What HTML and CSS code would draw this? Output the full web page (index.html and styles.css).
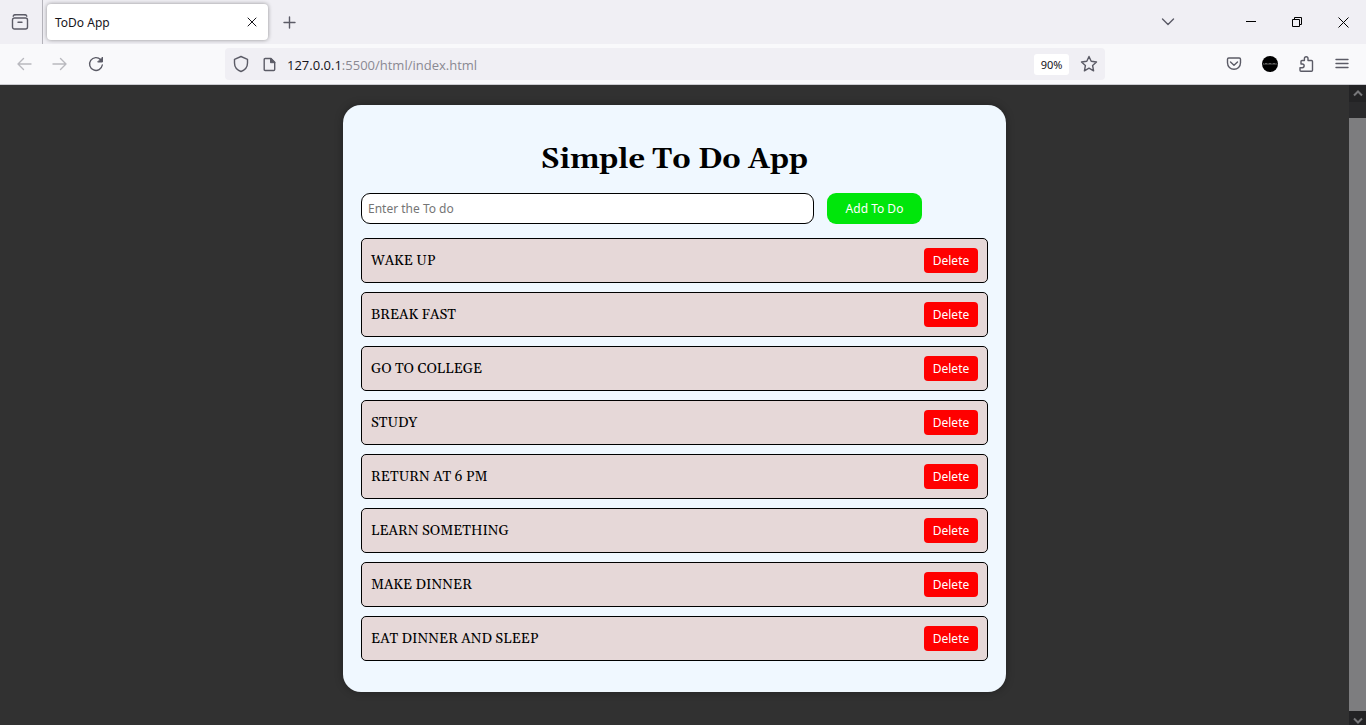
FILE: index.html
```html
<!DOCTYPE html>
<html lang="en">
<head>
<meta charset="utf-8">
<meta name="viewport" content="width=device-width, initial-scale=1">
<title>ToDo App</title>
<link rel="stylesheet" href="styles.css">
</head>
<body>
<header class="tabbar">
  <button class="icon-btn firefox-view" aria-label="Recent browsing">
    <svg width="18" height="18" viewBox="0 0 18 18"><path d="M4 1.700h10M3.500 5h11a2 2 0 0 1 2 2v7a2 2 0 0 1-2 2h-11a2 2 0 0 1-2-2V7a2 2 0 0 1 2-2zM7 9.300h4"/><path d="M2.200 3.200Q2.500 1.700 4 1.700M15.800 3.200Q15.500 1.700 14 1.700"/></svg>
  </button>
  <div class="tab">
    <span class="tab-title">ToDo App</span>
    <button class="icon-btn tab-close" aria-label="Close tab">
      <svg class="dark" width="10" height="10" viewBox="0 0 10 10"><path d="M1 1l8 8M9 1L1 9"/></svg>
    </button>
  </div>
  <button class="icon-btn new-tab" aria-label="New tab">
    <svg width="14" height="14" viewBox="0 0 14 14"><path d="M7.500 2v11M2 7.500h11"/></svg>
  </button>
  <div class="window-controls">
    <button class="icon-btn all-tabs" aria-label="List all tabs">
      <svg width="14" height="8" viewBox="0 0 14 8"><path d="M1.500 1l5.500 5.500L12.500 1"/></svg>
    </button>
    <button class="icon-btn win" aria-label="Minimize">
      <svg class="black" width="10" height="10" viewBox="0 0 10 10"><path d="M0 4.500h10"/></svg>
    </button>
    <button class="icon-btn win" aria-label="Restore">
      <svg class="black" width="10" height="10" viewBox="0 0 10 10"><path d="M.5 2.500h7v7h-7zM2.500 2.500v-2h7v7h-2"/></svg>
    </button>
    <button class="icon-btn win" aria-label="Close window">
      <svg class="black" width="11" height="11" viewBox="0 0 11 11"><path d="M.5.5l10 10M10.500.5l-10 10"/></svg>
    </button>
  </div>
</header>
<nav class="toolbar">
  <div class="nav-buttons">
    <button class="icon-btn" aria-label="Back" disabled><svg width="16" height="14" viewBox="0 0 16 14"><path d="M15 7H2M7.500 1.500L2 7l5.500 5.500"/></svg></button>
    <button class="icon-btn" aria-label="Forward" disabled><svg width="16" height="14" viewBox="0 0 16 14"><path d="M1 7h13M8.500 1.500L14 7l-5.500 5.500"/></svg></button>
    <button class="icon-btn" aria-label="Reload"><svg width="16" height="16" viewBox="0 0 16 16"><path d="M14.300 9A6.400 6.400 0 1 1 12.700 3.700"/><path class="solid" d="M14.500 1.500v4.500h-4.500z"/></svg></button>
  </div>
  <div class="urlbar">
    <svg width="16" height="18" viewBox="0 0 16 18"><path d="M8 1.500L14.500 4.300V8c0 4-2.500 7-6.500 8.500C4 15 1.500 12 1.500 8V4.300z"/></svg>
    <svg class="page" width="13" height="15" viewBox="0 0 13 15"><path d="M2.200 1.500h5.800l3.700 3.700v7.300q0 1-1 1h-8.500q-1 0-1-1v-10q0-1 1-1z"/><path class="solid" d="M7.500 1.500v4.200h4.200z"/></svg>
    <span class="url"><span class="host">127.0.0.1</span>:5500/html/index.html</span>
    <button class="zoom">90%</button>
    <button class="icon-btn star" aria-label="Bookmark this page"><svg width="18" height="18" viewBox="0 0 18 18"><path d="M9 1.500l2.200 4.800 5.300.7-3.900 3.500 1 5.300L9 13.200l-4.600 2.600 1-5.300L1.500 7l5.300-.7z"/></svg></button>
  </div>
  <div class="tools">
    <button class="icon-btn" aria-label="Save to Pocket"><svg width="16" height="16" viewBox="0 0 16 16"><path d="M2.800 2h10.400q1.300 0 1.300 1.300v3.500a6.500 6.500 0 0 1-13 0V3.300Q1.500 2 2.800 2zM4.500 6L8 9.300 11.500 6"/></svg></button>
    <button class="icon-btn" aria-label="Account"><svg width="16" height="16" viewBox="0 0 16 16"><circle class="avatar" cx="8" cy="8" r="8"/><path class="mark" d="M1 8.500l1-1 1 1 1-1.500 1 1.500 1-1 1 1 1-1.500 1 1.500 1-1 1 1 1-1.500 1 1.500 1-1 1 1"/></svg></button>
    <button class="icon-btn" aria-label="Extensions"><svg width="16" height="18" viewBox="0 0 16 18"><path d="M2 12.700V15.300q0 1 1 1h10.500q1 0 1-1V6.500q0-1-1-1H10V3.500a1.800 1.800 0 0 0-3.600 0V5.500H4q-1 0-1 1v2.500h1.300a1.850 1.850 0 0 1 0 3.700H2"/></svg></button>
    <button class="icon-btn" aria-label="Open application menu"><svg width="14" height="12" viewBox="0 0 14 12"><path d="M1 1.500h12M1 5.500h12M1 9.500h12"/></svg></button>
  </div>
</nav>
<div class="viewport">
  <main class="page-body">
    <section class="card">
      <h1>Simple To Do App</h1>
      <form class="add-form">
        <input class="todo-input" type="text" placeholder="Enter the To do" aria-label="Enter the To do">
        <button class="add-btn" type="button">Add To Do</button>
      </form>
      <ul class="list">
        <li class="item"><span>WAKE UP</span><button class="delete">Delete</button></li>
        <li class="item"><span>BREAK FAST</span><button class="delete">Delete</button></li>
        <li class="item"><span>GO TO COLLEGE</span><button class="delete">Delete</button></li>
        <li class="item"><span>STUDY</span><button class="delete">Delete</button></li>
        <li class="item"><span>RETURN AT 6 PM</span><button class="delete">Delete</button></li>
        <li class="item"><span>LEARN SOMETHING</span><button class="delete">Delete</button></li>
        <li class="item"><span>MAKE DINNER</span><button class="delete">Delete</button></li>
        <li class="item"><span>EAT DINNER AND SLEEP</span><button class="delete">Delete</button></li>
      </ul>
    </section>
  </main>
  <div class="scrollbar" aria-hidden="true">
    <div class="arrow"><svg width="10" height="7" viewBox="0 0 10 7"><path d="M1 5.500l4-4 4 4"/></svg></div>
    <div class="thumb"></div>
    <div class="arrow end"><svg width="10" height="7" viewBox="0 0 10 7"><path d="M1 1.500l4 4 4-4"/></svg></div>
  </div>
</div>
</body>
</html>
```
FILE: styles.css
```css
* { box-sizing: border-box; }
body {
  margin: 0;
  min-height: 100vh;
  display: flex;
  flex-direction: column;
  font-family: "Noto Sans", sans-serif;
  font-size: 12px;
  color: #15141a;
}
button { font: inherit; color: inherit; border: 0; padding: 0; background: none; }
svg { display: block; flex: none; fill: none; stroke: #5b5b66; stroke-width: 1.4; stroke-linecap: round; stroke-linejoin: round; }
.icon-btn { display: flex; align-items: center; justify-content: center; flex: none; }
.icon-btn:disabled { opacity: 0.4; }
.solid { fill: #5b5b66; stroke-width: 1; }
.dark { stroke: #15141a; stroke-width: 1; }
.black { stroke: #000; stroke-width: 1; stroke-linecap: butt; stroke-linejoin: miter; }

.tabbar { display: flex; align-items: center; height: 44px; background: #f0eff4; }
.firefox-view { width: 43px; height: 44px; padding-right: 2px; border-right: 1px solid #b4b3ba; }
.tab {
  display: flex;
  align-items: center;
  justify-content: space-between;
  width: 221px;
  height: 36px;
  margin-left: 4px;
  padding: 0 10px 0 8px;
  background: #fff;
  border-radius: 4px;
  box-shadow: 0 0 4px rgba(0, 0, 0, 0.4);
}
.tab-close { width: 12px; height: 12px; }
.new-tab { width: 42px; height: 36px; }
.window-controls { display: flex; margin-left: auto; }
.all-tabs { width: 60px; height: 44px; }
.win { width: 46px; height: 44px; }
.all-tabs + .win { margin-left: 30px; }

.toolbar {
  display: grid;
  grid-template-columns: 225px 1fr 261px;
  align-items: center;
  height: 41px;
  background: #f9f9fb;
  border-bottom: 1px solid #ccccd1;
}
.nav-buttons { display: flex; padding-left: 6px; }
.nav-buttons .icon-btn { width: 36px; height: 32px; }
.urlbar {
  display: flex;
  align-items: center;
  height: 32px;
  padding: 0 7px 0 8px;
  background: #f0eff4;
  border-radius: 4px;
}
.page { margin-left: 14px; }
.url { flex: 1; margin-left: 11px; padding-top: 2px; font-family: "Open Sans", sans-serif; font-size: 13px; color: #8a8992; }
.host { color: #15141a; }
.zoom { width: 35px; height: 21px; border-radius: 3px; background: #fff; font-size: 11px; }
.star { margin-left: 11px; }
.tools { display: flex; justify-content: flex-end; padding-right: 6px; }
.tools .icon-btn { width: 36px; height: 32px; }
.avatar { fill: #000; stroke: none; }
.mark { stroke: #999; stroke-width: 0.7; }

.viewport { flex: 1; display: flex; background: #313131; }
.page-body { flex: 1; padding: 20px 0 32px; }
.card {
  max-width: 663px;
  margin: 0 auto;
  padding: 37px 18px 31px;
  background: #f0f8ff;
  border-radius: 18px;
  box-shadow: 0 0 9px rgba(0, 0, 0, 0.3);
  color: #000;
}
h1 { margin: 0 0 15px; font: bold 29px/36px Gelasio, Georgia, "Liberation Serif", serif; text-align: center; }
.add-form { display: flex; gap: 13px; margin-bottom: 14px; }
.todo-input {
  width: 453px;
  height: 31px;
  padding: 0 6px;
  border: 1px solid #000;
  border-radius: 9px;
  background: #fff;
  font: 12px "Noto Sans", sans-serif;
}
.todo-input::placeholder { color: #757575; opacity: 1; }
.add-btn { width: 95px; height: 31px; border-radius: 9px; background: #00e60b; color: #fff; }
.list { display: grid; gap: 9px; margin: 0; padding: 0; list-style: none; }
.item {
  display: flex;
  align-items: center;
  justify-content: space-between;
  height: 45px;
  padding: 0 9px;
  border: 1px solid #000;
  border-radius: 5px;
  background: #e6d8d8;
  font: 14px Gelasio, Georgia, "Liberation Serif", serif;
}
.delete { width: 54px; height: 25px; border-radius: 4px; background: #f00; color: #fff; font: 12px "Noto Sans", sans-serif; }

.scrollbar { display: flex; flex-direction: column; width: 17px; background: #2a2a2c; }
.arrow { display: flex; align-items: center; justify-content: center; height: 17px; background: #232325; }
.arrow svg { stroke: #77777a; stroke-width: 2; stroke-linecap: butt; stroke-linejoin: miter; }
.arrow.end { height: 14px; padding-top: 4px; }
.thumb { flex: 1; margin-top: 16px; background: #7d7d7f; }
```
